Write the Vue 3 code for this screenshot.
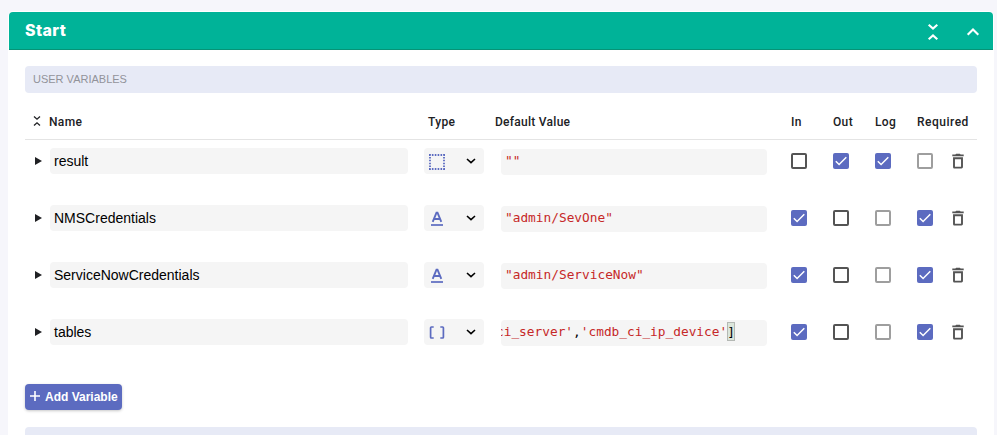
<script setup>
import { ref } from 'vue'

const variables = ref([
  { name: 'result', type: 'any', value: [['s', '""']], in: false, out: true, log: true, required: false, lockRequired: true },
  { name: 'NMSCredentials', type: 'string', value: [['s', '"admin/SevOne"']], in: true, out: false, log: false, required: true, lockLog: true },
  { name: 'ServiceNowCredentials', type: 'string', value: [['s', '"admin/ServiceNow"']], in: true, out: false, log: false, required: true, lockLog: true },
  {
    name: 'tables', type: 'array', scrolled: true,
    value: [['s', 'ci_server\''], ['p', ','], ['s', '\'cmdb_ci_ip_device\''], ['b', ']']],
    in: true, out: false, log: false, required: true, lockLog: true
  }
])

const flags = (v) => [
  { key: 'in', on: v.in },
  { key: 'out', on: v.out },
  { key: 'log', on: v.log, dim: v.lockLog },
  { key: 'required', on: v.required, dim: v.lockRequired }
]
</script>

<template>
  <main class="page">
    <section class="panel">
      <header class="panel-head">
        <h1>Start</h1>
        <svg class="fold" width="12" height="18" viewBox="0 0 12 18"><path d="M1.7 1.7 6 5.6l4.3-3.9M1.7 16.3 6 12.4l4.3 3.9" /></svg>
        <svg class="up" width="14" height="10" viewBox="0 0 14 10"><path d="M1.7 7.8 7 2.5l5.3 5.3" /></svg>
      </header>
      <div class="content">
        <div class="bar"><span>USER VARIABLES</span></div>
        <div class="row labels">
          <svg class="sort" width="8" height="12" viewBox="0 0 8 12"><path d="M1 1.5l3 2.7 3-2.7M1 10.5l3-2.7 3 2.7" /></svg>
          <span class="name-label">Name</span>
          <span class="type-label">Type</span>
          <span class="value-label">Default Value</span>
          <span class="in-label">In</span>
          <span>Out</span>
          <span>Log</span>
          <span class="req-label">Required</span>
        </div>
        <div v-for="v in variables" :key="v.name" class="row item">
          <svg class="tri" width="7" height="8" viewBox="0 0 7 8"><path d="M0 0l7 4-7 4z" /></svg>
          <div class="field name">{{ v.name }}</div>
          <div class="field type">
            <svg v-if="v.type === 'any'" width="18" height="18" viewBox="0 0 18 18">
              <path class="dots" d="M1 3h16M1 17h16M2 2v16M16 2v16" />
            </svg>
            <svg v-else-if="v.type === 'string'" width="18" height="18" viewBox="0 0 18 18">
              <path class="letter" d="M4.7 12.8 8.5 3.6h1L13.3 12.8M6.2 10h5.6" /><path class="under" d="M3 16h12" />
            </svg>
            <svg v-else width="18" height="18" viewBox="0 0 18 18">
              <path class="bracket" d="M5.7 4H3.4q-.8 0-.8.8v9.400q0 .8.8.8h2.300M12.300 4h2.300q.8 0 .8.8v9.400q0 .8-.8.8h-2.300" />
            </svg>
            <svg class="down" width="10" height="6" viewBox="0 0 10 6"><path d="M1 1l4 3.6L9 1" /></svg>
          </div>
          <div class="field value" :class="{ scrolled: v.scrolled }"><span v-for="(t, i) in v.value" :key="i" :class="t[0]">{{ t[1] }}</span></div>
          <div v-for="f in flags(v)" :key="f.key" class="check" :class="{ on: f.on, dim: f.dim }">
            <svg v-if="f.on" width="16" height="16" viewBox="0 0 16 16"><path d="M2.8 8.2 6.1 11.5 13.3 4.3" /></svg>
          </div>
          <svg class="trash" width="12" height="16" viewBox="0 0 12 16">
            <path class="solid" d="M.3 1.6h3l.9-.9h3.6l.9.9h3v1.600H.3z" />
            <path d="M2 5.200h8v8.900q0 .5-.5.5h-7q-.5 0-.5-.5z" />
          </svg>
        </div>
        <button class="add"><svg width="10" height="10" viewBox="0 0 10 10"><path d="M5 0v10M0 5h10" /></svg><span>Add Variable</span></button>
        <div class="bar"></div>
      </div>
    </section>
  </main>
</template>

<style>
body { overflow: hidden; }
</style>

<style scoped>
.page {
  box-sizing: border-box;
  height: 435px;
  overflow: hidden;
  padding: 11px 3px 0 8px;
  background: #f6f6fb;
  font-family: "Liberation Sans", Arial, sans-serif;
  color: #202124;
}
.panel {
  height: 500px;
  border: 1px solid #fff;
  border-radius: 5px;
  background: #fff;
}
.panel-head {
  display: flex;
  align-items: center;
  box-sizing: border-box;
  height: 38px;
  padding: 0 13px 0 16px;
  border-bottom: 1px solid #069376;
  border-radius: 4px 4px 0 0;
  background: #00b398;
  color: #fff;
}
h1 {
  flex: 1;
  margin: 0;
  padding-bottom: 2px;
  font: 800 16px/20px Inter, sans-serif;
  letter-spacing: 0.4px;
}
svg { display: block; fill: none; flex: none; }
.panel-head svg { stroke: #fff; stroke-width: 2.1; margin-top: 2px; }
.panel-head .fold { margin-right: 27px; }
.content { padding: 16px 16px 0; }
.bar {
  height: 27px;
  border-radius: 4px;
  background: #e7eaf6;
}
.bar span {
  display: block;
  padding-left: 8px;
  font-size: 11px;
  line-height: 27px;
  color: #92939a;
}
.row {
  display: grid;
  grid-template-columns: 25px 358px 16px 60px 16px 267px 24px 42px 42px 42px 35px 1fr;
}
.labels {
  box-sizing: border-box;
  height: 47px;
  padding-top: 12px;
  align-items: center;
  border-bottom: 1px solid #e4e4e4;
  font: 500 12px/16px Roboto, sans-serif;
  letter-spacing: 0.35px;
}
.sort { margin: -3px 0 0 8px; stroke: #202124; stroke-width: 1.3; }
.name-label { margin-left: -1px; }
.type-label { grid-column: 4; padding-left: 4px; }
.value-label { grid-column: 6; margin-left: -5px; letter-spacing: 0.27px; }
.in-label { grid-column: 8; }
.req-label { white-space: nowrap; letter-spacing: 0.5px; }
.item { height: 57px; padding-top: 8px; box-sizing: border-box; align-items: start; }
.tri { margin: 9px 0 0 10px; fill: #202124; }
.field {
  display: flex;
  align-items: center;
  box-sizing: border-box;
  height: 26px;
  border-radius: 4px;
  background: #f5f5f5;
}
.name { padding-left: 4px; font-size: 14px; color: #000; }
.type { grid-column: 4; padding-left: 4px; }
.type svg { stroke: #5c6bc0; }
.dots { stroke-width: 1.8; stroke-dasharray: 1.6 1.28; }
.letter { stroke-width: 1.9; }
.under { stroke-width: 1.7; }
.bracket { stroke-width: 1.7; }
.type .down { margin-left: 20px; stroke: #000; stroke-width: 1.6; }
.value {
  grid-column: 6;
  margin: 1px 0.5px 0;
  padding-left: 4.5px;
  padding-bottom: 4px;
  overflow: hidden;
  white-space: pre;
  font: 12.8px/19px "DejaVu Sans Mono", monospace;
  color: #000;
}
.value.scrolled { padding-left: 0; }
.scrolled span:first-child { margin-left: -4.5px; }
.s { color: #c62828; }
.b { outline: 1px solid #b4b8b4; outline-offset: -1px; background: #dbe6db; }
.check {
  box-sizing: border-box;
  width: 16px;
  height: 16px;
  margin-top: 5px;
  border: 2px solid #545454;
  border-radius: 2px;
}
.check:nth-of-type(4) { grid-column: 8; }
.check.dim { border-color: #9e9e9e; }
.check.on { border: 0; background: #5c6bc0; }
.check path { stroke: #fff; stroke-width: 1.5; }
.trash { margin-top: 5px; stroke: #545454; stroke-width: 1.9; }
.trash .solid { fill: #545454; stroke: none; }
.add {
  display: flex;
  align-items: center;
  box-sizing: border-box;
  width: 97px;
  height: 26px;
  margin: 16px 0 17px;
  padding: 0 0 0 5px;
  border: 0;
  border-radius: 4px;
  background: #5c6bc0;
  box-shadow: 0 1px 3px rgba(0, 0, 0, 0.22);
  color: #fff;
  font: 700 12px/16px "Liberation Sans", Arial, sans-serif;
  white-space: nowrap;
}
.add svg { stroke: #fff; stroke-width: 1.6; margin: -2px 5px 0 0; }
</style>
